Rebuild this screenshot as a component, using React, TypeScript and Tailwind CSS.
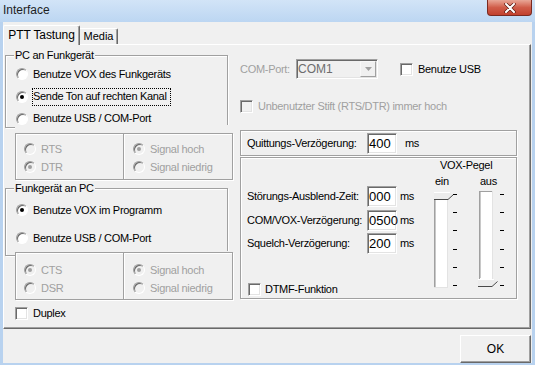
import clsx from "clsx";
import type { ReactNode } from "react";

const etched = "border border-[#a0a0a0] shadow-[inset_1px_1px_0_#fff,1px_1px_0_#fff]";
const sunken =
  "border border-t-[#a0a0a0] border-l-[#a0a0a0] border-r-white border-b-white shadow-[inset_1px_1px_0_#696969,inset_-1px_-1px_0_#e3e3e3]";

function Radio({ checked, disabled }: { checked?: boolean; disabled?: boolean }) {
  return (
    <span
      className={clsx(
        "flex h-[12px] w-[12px] shrink-0 items-center justify-center rounded-full border border-t-[#a0a0a0] border-l-[#a0a0a0] border-r-white border-b-white shadow-[inset_1px_1px_0_#696969]",
        disabled ? "bg-[#f0f0f0]" : "bg-white",
      )}
    >
      {checked && (
        <span className={clsx("h-[4px] w-[4px] rounded-full", disabled ? "bg-[#a0a0a0]" : "bg-black")} />
      )}
    </span>
  );
}

function Check({ disabled }: { disabled?: boolean }) {
  return (
    <span className={clsx("block h-[13px] w-[13px] shrink-0", sunken, disabled ? "bg-[#f0f0f0]" : "bg-white")} />
  );
}

function Group({ title, className, children }: { title: string; className: string; children: ReactNode }) {
  return (
    <div className={clsx("relative flex flex-col pl-[10px]", etched, className)}>
      <span className="absolute -top-[7px] left-[8px] bg-[#f0f0f0] px-[1px] leading-[13px]">{title}</span>
      {children}
    </div>
  );
}

function SubRow({ label, checked, className }: { label: string; checked?: boolean; className: string }) {
  return (
    <div className={clsx("flex h-[14px] items-center gap-[5px] text-[#a0a0a0]", className)}>
      <Radio checked={checked} disabled />
      <span>{label}</span>
    </div>
  );
}

function SubBoxes({ a, b, top, checkA, checkB }: { a: [string, string]; b: [string, string]; top: string; checkA: number; checkB: number }) {
  return (
    <div className="flex h-full">
      <div className={clsx("flex w-[109px] flex-col pl-[8px]", etched)}>
        <SubRow label={a[0]} checked={checkA === 0} className={top} />
        <SubRow label={a[1]} checked={checkA === 1} className="mt-[4px]" />
      </div>
      <div className={clsx("-ml-[1px] flex w-[110px] flex-col pl-[9px]", etched)}>
        <SubRow label={b[0]} checked={checkB === 0} className={top} />
        <SubRow label={b[1]} checked={checkB === 1} className="mt-[4px]" />
      </div>
    </div>
  );
}

function Field({ value }: { value: string }) {
  return (
    <span className={clsx("flex h-[21px] w-[30px] shrink-0 items-center bg-white pl-[1px] text-[13px] leading-[15px] tracking-normal", sunken)}>
      {value}
    </span>
  );
}

function Sliders() {
  const ticks = [4, 22, 40, 59, 77, 95];
  return (
    <svg width="80" height="100" viewBox="0 0 80 100" className="block">
      {/* ein */}
      <rect x="4" y="9" width="14" height="89" fill="#fff" />
      <line x1="4.5" y1="9" x2="4.5" y2="98" stroke="#a0a0a0" />
      <line x1="5.5" y1="10" x2="5.5" y2="97" stroke="#c8c8c8" />
      <line x1="17.5" y1="9" x2="17.5" y2="98" stroke="#e3e3e3" />
      <line x1="4" y1="97.5" x2="18" y2="97.5" stroke="#e3e3e3" />
      <polygon points="4,2 20,2 23,5 18,9 4,9" fill="#ececec" />
      <polyline points="4,2.5 20,2.5" fill="none" stroke="#fff" />
      <polyline points="4,9.5 18,9.5 23.5,4.5" fill="none" stroke="#4a4a4a" />
      {/* aus */}
      <rect x="49" y="1" width="14" height="88" fill="#fff" />
      <line x1="49.5" y1="1" x2="49.5" y2="89" stroke="#a0a0a0" />
      <line x1="49" y1="1.5" x2="63" y2="1.5" stroke="#a0a0a0" />
      <line x1="50.5" y1="2" x2="50.5" y2="88" stroke="#c8c8c8" />
      <line x1="62.5" y1="1" x2="62.5" y2="89" stroke="#e3e3e3" />
      <polygon points="48,89 64,89 67,92 62,96 48,96" fill="#ececec" />
      <polyline points="48,89.5 64,89.5" fill="none" stroke="#fff" />
      <polyline points="48,96.5 62,96.5 67.5,91.5" fill="none" stroke="#4a4a4a" />
      {ticks.map((y) => (
        <g key={y}>
          <rect x="23" y={y} width="4" height="1" fill="#000" />
          <rect x="70" y={y} width="4" height="1" fill="#000" />
        </g>
      ))}
    </svg>
  );
}

export default function App() {
  return (
    <div className="flex h-[365px] w-[535px] flex-col whitespace-nowrap bg-[#b8d2ef] font-['Liberation_Sans',Arial,sans-serif] text-[11px] leading-[13px] tracking-[-0.3px] text-black">
      <div className="flex h-[22px] shrink-0 items-start justify-between bg-linear-to-b from-[#d2e4f7] to-[#bcd6f2]">
        <span className="pl-[3px] pt-[3px] text-[12px] leading-[14px] tracking-normal text-[#1e1e1e]">Interface</span>
        <div className="mr-[3px] flex h-[16px] w-[45px] items-center justify-center rounded-b-[4px] border border-t-0 border-[#7a2a20] bg-linear-to-b from-[#e8a697] via-[#d05c49] to-[#c1402d]">
          <svg width="12" height="10" viewBox="0 0 12 10">
            <path d="M2 1 L10 9 M10 1 L2 9" stroke="#5a1a12" strokeWidth="3.4" strokeLinecap="round" />
            <path d="M2 1 L10 9 M10 1 L2 9" stroke="#fff" strokeWidth="2" strokeLinecap="round" />
          </svg>
        </div>
      </div>

      <div className="mx-[3px] mb-[2px] flex flex-1 flex-col bg-[#f0f0f0]">
        <div className="flex h-[22px] shrink-0 items-end">
          <div className="relative z-10 -mb-[1px] flex h-[20px] w-[77px] items-center justify-center rounded-t-[2px] border-t border-l border-r border-t-white border-l-white border-r-[#696969] bg-[#f0f0f0] pb-[1px] text-[12px] tracking-[-0.1px] shadow-[inset_-1px_0_0_#a0a0a0]">
            PTT Tastung
          </div>
          <div className="flex h-[16px] w-[38px] items-center justify-center rounded-tr-[2px] border-t border-r border-t-white border-r-[#696969] tracking-normal shadow-[inset_-1px_0_0_#a0a0a0]">
            Media
          </div>
        </div>

        <div className="flex h-[285px] w-[528px] shrink-0 border border-t-white border-l-white border-r-[#696969] border-b-[#696969] shadow-[inset_-1px_-1px_0_#a0a0a0]">
          <div className="ml-[1px] flex w-[228px] flex-col">
            <Group title="PC an Funkgerät" className="mt-[10px] h-[73px] w-[223px]">
              <div className="mt-[10px] flex h-[18px] items-center gap-[5px]">
                <Radio />
                <span>Benutze VOX des Funkgeräts</span>
              </div>
              <div className="mt-[5px] flex h-[18px] items-center gap-[4px]">
                <Radio checked />
                <span className="flex h-[18px] items-center border border-dotted border-black pr-[3px]">
                  Sende Ton auf rechten Kanal
                </span>
              </div>
              <div className="mt-[5px] flex h-[18px] items-center gap-[5px]">
                <Radio />
                <span>Benutze USB / COM-Port</span>
              </div>
            </Group>
            <div className="relative -mt-[3px] ml-[10px] h-[55px] w-[218px] bg-[#f0f0f0] pt-[8px]">
              <SubBoxes a={["RTS", "DTR"]} b={["Signal hoch", "Signal niedrig"]} top="mt-[8px]" checkA={1} checkB={0} />
            </div>

            <Group title="Funkgerät an PC" className="mt-[8px] h-[68px] w-[223px]">
              <div className="mt-[12px] flex h-[18px] items-center gap-[5px]">
                <Radio checked />
                <span>Benutze VOX im Programm</span>
              </div>
              <div className="mt-[10px] flex h-[18px] items-center gap-[5px]">
                <Radio />
                <span>Benutze USB / COM-Port</span>
              </div>
            </Group>
            <div className="relative -mt-[5px] ml-[10px] h-[49px] w-[218px] bg-[#f0f0f0] pt-[1px]">
              <SubBoxes a={["CTS", "DSR"]} b={["Signal hoch", "Signal niedrig"]} top="mt-[10px]" checkA={0} checkB={0} />
            </div>

            <div className="ml-[10px] mt-[7px] flex h-[13px] items-center gap-[5px]">
              <Check />
              <span>Duplex</span>
            </div>
          </div>

          <div className="ml-[7px] flex w-[279px] flex-col">
            <div className="mt-[14px] flex h-[20px] items-center">
              <span className="w-[56px] text-[#a0a0a0]">COM-Port:</span>
              <div className={clsx("flex h-[20px] w-[82px] items-center justify-between bg-[#f0f0f0] pl-[1px] pr-[1px]", sunken)}>
                <span className="text-[12px] leading-[14px] tracking-normal text-[#6d6d6d]">COM1</span>
                <span className="flex h-[16px] w-[16px] items-center justify-center border border-t-[#f8f8f8] border-l-[#f8f8f8] border-r-[#a0a0a0] border-b-[#a0a0a0] bg-[#f0f0f0]">
                  <svg width="7" height="4" viewBox="0 0 7 4">
                    <path d="M0 0 H7 L3.5 4 Z" fill="#a0a0a0" />
                  </svg>
                </span>
              </div>
              <span className="ml-[22px]">
                <Check />
              </span>
              <span className="ml-[5px]">Benutze USB</span>
            </div>

            <div className="mt-[21px] flex h-[13px] items-center gap-[5px] text-[#a0a0a0]">
              <Check disabled />
              <span>Unbenutzter Stift (RTS/DTR) immer hoch</span>
            </div>

            <div className={clsx("mt-[17px] flex h-[26px] w-[277px] items-center pl-[6px]", etched)}>
              <span className="w-[120px]">Quittungs-Verzögerung:</span>
              <Field value="400" />
              <span className="ml-[8px]">ms</span>
            </div>

            <div className={clsx("mt-[1px] flex h-[142px] w-[277px]", etched)}>
              <div className="flex w-[189px] flex-col pl-[6px]">
                <div className="mt-[28px] flex h-[21px] items-center">
                  <span className="w-[120px]">Störungs-Ausblend-Zeit:</span>
                  <Field value="000" />
                  <span className="ml-[3px]">ms</span>
                </div>
                <div className="mt-[3px] flex h-[21px] items-center">
                  <span className="w-[120px]">COM/VOX-Verzögerung:</span>
                  <Field value="0500" />
                  <span className="ml-[3px]">ms</span>
                </div>
                <div className="mt-[2px] flex h-[21px] items-center">
                  <span className="w-[120px]">Squelch-Verzögerung:</span>
                  <Field value="200" />
                  <span className="ml-[3px]">ms</span>
                </div>
                <div className="ml-[1px] mt-[29px] flex h-[13px] items-center gap-[4px]">
                  <Check />
                  <span>DTMF-Funktion</span>
                </div>
              </div>
              <div className="flex flex-col">
                <span className="mt-[1px] pl-[10px]">VOX-Pegel</span>
                <div className="mt-[3px] flex">
                  <span className="ml-[5px] w-[45px]">ein</span>
                  <span>aus</span>
                </div>
                <div className="mt-[2px]">
                  <Sliders />
                </div>
              </div>
            </div>
          </div>
        </div>

        <div className="mt-[6px] flex justify-end pr-[1px]">
          <div className="flex h-[28px] w-[71px] items-center justify-center border border-t-white border-l-white border-r-[#696969] border-b-[#696969] bg-[#f0f0f0] text-[12px] tracking-normal shadow-[inset_-1px_-1px_0_#a0a0a0]">
            OK
          </div>
        </div>
      </div>
    </div>
  );
}
